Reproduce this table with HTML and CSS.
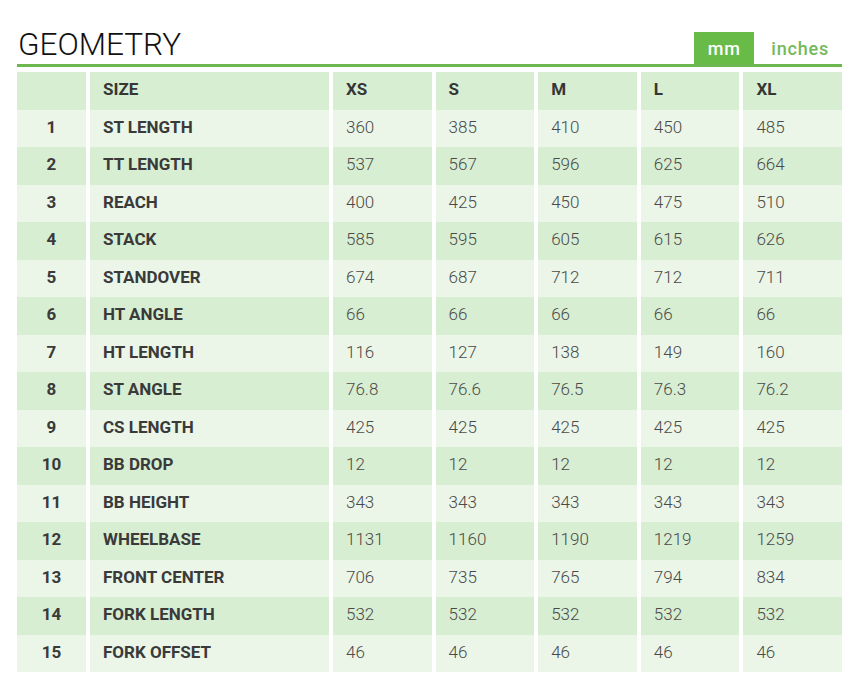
FILE: index.html
```html
<!DOCTYPE html>
<html>
<head>
<meta charset="utf-8">
<link rel="stylesheet" href="styles.css">
</head>
<body>
<div class="geo">
  <div class="head">
    <h1 class="title">GEOMETRY</h1>
    <div class="units">
      <span class="unit active">mm</span>
      <span class="unit">inches</span>
    </div>
  </div>
  <table class="tbl">
    <thead>
      <tr><th class="num"></th><th class="lbl">SIZE</th><th>XS</th><th>S</th><th>M</th><th>L</th><th>XL</th></tr>
    </thead>
    <tbody>
      <tr><td class="num">1</td><td class="lbl">ST LENGTH</td><td>360</td><td>385</td><td>410</td><td>450</td><td>485</td></tr>
      <tr><td class="num">2</td><td class="lbl">TT LENGTH</td><td>537</td><td>567</td><td>596</td><td>625</td><td>664</td></tr>
      <tr><td class="num">3</td><td class="lbl">REACH</td><td>400</td><td>425</td><td>450</td><td>475</td><td>510</td></tr>
      <tr><td class="num">4</td><td class="lbl">STACK</td><td>585</td><td>595</td><td>605</td><td>615</td><td>626</td></tr>
      <tr><td class="num">5</td><td class="lbl">STANDOVER</td><td>674</td><td>687</td><td>712</td><td>712</td><td>711</td></tr>
      <tr><td class="num">6</td><td class="lbl">HT ANGLE</td><td>66</td><td>66</td><td>66</td><td>66</td><td>66</td></tr>
      <tr><td class="num">7</td><td class="lbl">HT LENGTH</td><td>116</td><td>127</td><td>138</td><td>149</td><td>160</td></tr>
      <tr><td class="num">8</td><td class="lbl">ST ANGLE</td><td>76.8</td><td>76.6</td><td>76.5</td><td>76.3</td><td>76.2</td></tr>
      <tr><td class="num">9</td><td class="lbl">CS LENGTH</td><td>425</td><td>425</td><td>425</td><td>425</td><td>425</td></tr>
      <tr><td class="num">10</td><td class="lbl">BB DROP</td><td>12</td><td>12</td><td>12</td><td>12</td><td>12</td></tr>
      <tr><td class="num">11</td><td class="lbl">BB HEIGHT</td><td>343</td><td>343</td><td>343</td><td>343</td><td>343</td></tr>
      <tr><td class="num">12</td><td class="lbl">WHEELBASE</td><td>1131</td><td>1160</td><td>1190</td><td>1219</td><td>1259</td></tr>
      <tr><td class="num">13</td><td class="lbl">FRONT CENTER</td><td>706</td><td>735</td><td>765</td><td>794</td><td>834</td></tr>
      <tr><td class="num">14</td><td class="lbl">FORK LENGTH</td><td>532</td><td>532</td><td>532</td><td>532</td><td>532</td></tr>
      <tr><td class="num">15</td><td class="lbl">FORK OFFSET</td><td>46</td><td>46</td><td>46</td><td>46</td><td>46</td></tr>
    </tbody>
  </table>
</div>
</body>
</html>
```
FILE: styles.css
```css
* { box-sizing: border-box; }
html, body { margin: 0; padding: 0; background: #fff; }
body { font-family: Roboto, "Liberation Sans", sans-serif; }
.geo { width: 825px; margin-left: 17px; padding-top: 24px; }
.head {
  display: flex;
  align-items: flex-end;
  justify-content: space-between;
  border-bottom: 3px solid #6cb84e;
  height: 43px;
}
.title {
  margin: 0 0 1px 1px;
  font-weight: 300;
  font-size: 31.5px;
  line-height: 36px;
  color: #111;
  letter-spacing: 0;
}
.units { display: flex; align-items: stretch; height: 32px; margin-right: 13px; }
.unit {
  display: flex;
  align-items: center;
  justify-content: center;
  font-size: 18px;
  font-weight: 500;
  letter-spacing: 0.8px;
  color: #74b95a;
  padding: 0 0 0 17px;
}
.unit.active { background: #67bb46; color: #fff; width: 60px; padding: 0; }
.tbl {
  margin-top: 5px;
  width: 833px;
  margin-left: -4px;
  border-collapse: separate;
  border-spacing: 4px 0;
  table-layout: fixed;
  font-size: 17px;
}
.tbl th, .tbl td {
  height: 37.5px;
  padding: 0 0 3px 13px;
  text-align: left;
  vertical-align: middle;
}
.tbl th { font-weight: 700; color: #363636; }
.tbl td { font-weight: 300; color: #4a4a4a; }
.tbl td.lbl, .tbl td.num { font-weight: 700; color: #3a3a3a; }
.tbl .num { width: 69px; text-align: center; padding: 0 0 3px 0; }
.tbl .lbl { width: 239px; }
.tbl thead th { background: #d8eed2; }
.tbl tbody tr:nth-child(odd) td { background: #ebf6e8; }
.tbl tbody tr:nth-child(even) td { background: #d8eed2; }
```
